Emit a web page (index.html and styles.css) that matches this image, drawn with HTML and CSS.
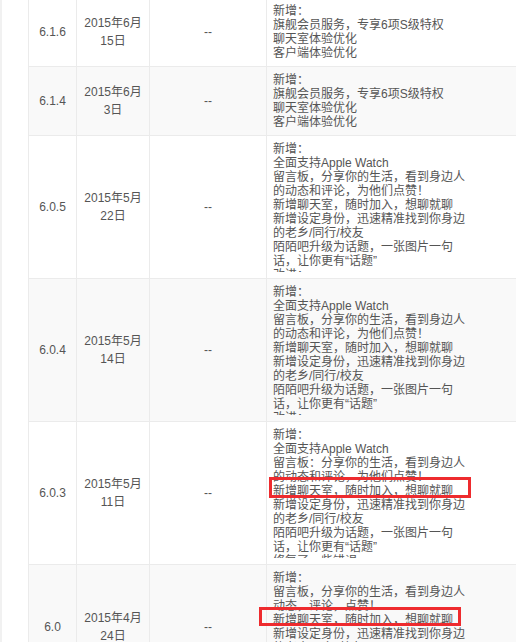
FILE: index.html
```html
<!DOCTYPE html>
<html lang="zh-CN">
<head>
    <meta charset="UTF-8">
    <meta name="viewport" content="width=device-width, initial-scale=1.0">
    <title>版本历史</title>
    <link rel="stylesheet" href="styles.css">
</head>
<body>
    <div class="page">
        <table class="history">
            <colgroup>
                <col class="col-ver">
                <col class="col-date">
                <col class="col-size">
                <col class="col-log">
            </colgroup>
            <tr>
                <td>6.1.6</td>
                <td>2015年6月15日</td>
                <td>--</td>
                <td class="log"><div class="log-text">新增：<br>旗舰会员服务，专享6项S级特权<br>聊天室体验优化<br>客户端体验优化</div></td>
            </tr>
            <tr class="alt">
                <td>6.1.4</td>
                <td>2015年6月3日</td>
                <td>--</td>
                <td class="log"><div class="log-text">新增：<br>旗舰会员服务，专享6项S级特权<br>聊天室体验优化<br>客户端体验优化</div></td>
            </tr>
            <tr>
                <td>6.0.5</td>
                <td>2015年5月22日</td>
                <td>--</td>
                <td class="log"><div class="log-text">新增：<br>全面支持Apple Watch<br>留言板，分享你的生活，看到身边人的动态和评论，为他们点赞！<br>新增聊天室，随时加入，想聊就聊<br>新增设定身份，迅速精准找到你身边的老乡/同行/校友<br>陌陌吧升级为话题，一张图片一句话，让你更有“话题”<br>改进：</div></td>
            </tr>
            <tr class="alt">
                <td>6.0.4</td>
                <td>2015年5月14日</td>
                <td>--</td>
                <td class="log"><div class="log-text">新增：<br>全面支持Apple Watch<br>留言板，分享你的生活，看到身边人的动态和评论，为他们点赞！<br>新增聊天室，随时加入，想聊就聊<br>新增设定身份，迅速精准找到你身边的老乡/同行/校友<br>陌陌吧升级为话题，一张图片一句话，让你更有“话题”<br>改进：</div></td>
            </tr>
            <tr>
                <td>6.0.3</td>
                <td>2015年5月11日</td>
                <td>--</td>
                <td class="log"><div class="log-text">新增：<br>全面支持Apple Watch<br>留言板：分享你的生活，看到身边人的动态和评论，为他们点赞！<br>新增聊天室，随时加入，想聊就聊<br>新增设定身份，迅速精准找到你身边的老乡/同行/校友<br>陌陌吧升级为话题，一张图片一句话，让你更有“话题”<br>修复了一些错误</div></td>
            </tr>
            <tr class="alt">
                <td>6.0</td>
                <td>2015年4月24日</td>
                <td>--</td>
                <td class="log"><div class="log-text">新增：<br>留言板，分享你的生活，看到身边人动态，评论，点赞！<br>新增聊天室，随时加入，想聊就聊<br>新增设定身份，迅速精准找到你身边的老乡/同行/校友<br>陌陌吧升级为话题，一张图片一句话，让你更有“话题”</div></td>
            </tr>
        </table>
        <div class="mark mark-one"></div>
        <div class="mark mark-two"></div>
    </div>
</body>
</html>
```

FILE: styles.css
```css
html, body { margin: 0; padding: 0; background: #fff; overflow: hidden; }
body { font-family: "Liberation Sans", Arial, "Noto Sans CJK SC", sans-serif; font-size: 12px; color: #555; }
.page { position: relative; border-left: 2px solid #f1f1f1; padding-left: 26px; }
.history { border-collapse: collapse; table-layout: fixed; width: 540px; margin-top: -3px; }
.col-ver { width: 48px; }
.col-date { width: 73px; }
.col-size { width: 117px; }
.history td { border: 1px solid #ebebeb; padding: 6px 6px; text-align: center; vertical-align: middle; line-height: 18px; }
.history tr.alt td { background: #f9f9f9; }
.history td.log { text-align: left; vertical-align: top; line-height: 14px; }
.log-text { width: 196px; max-height: 130px; overflow: hidden; }
.mark { position: absolute; border: 3px solid #ee2b2e; box-sizing: border-box; }
.mark-one { left: 267px; top: 480px; width: 202px; height: 21px; }
.mark-two { left: 257px; top: 610px; width: 202px; height: 19px; }
```
